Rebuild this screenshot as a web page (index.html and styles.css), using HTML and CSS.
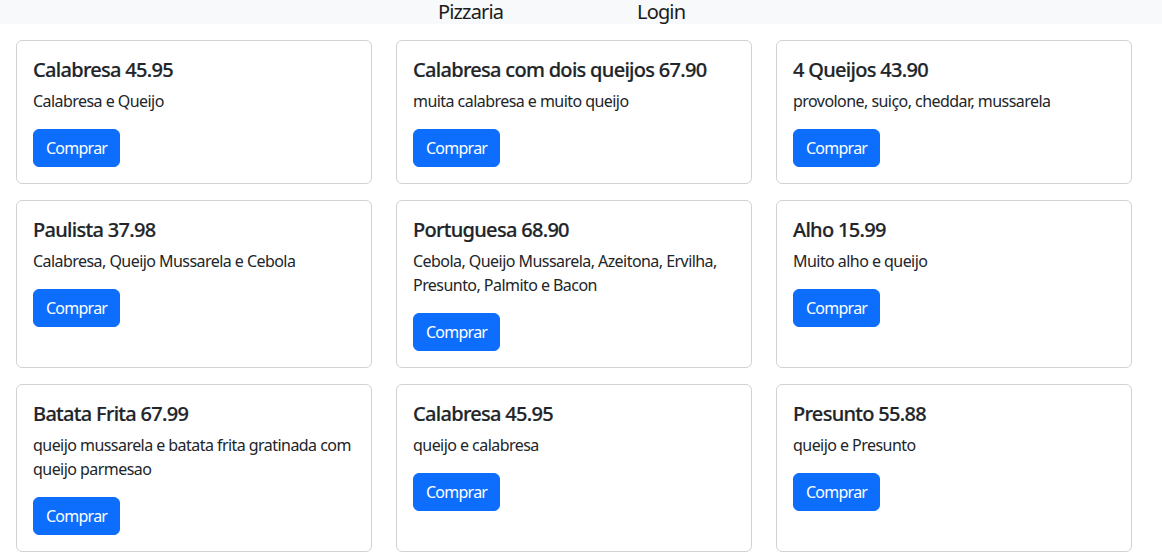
FILE: index.html
```html
<!DOCTYPE html>
<html lang="pt">
<head>
<meta charset="utf-8">
<title>Pizzaria</title>
<link rel="stylesheet" href="styles.css">
</head>
<body>
<nav class="navbar">
  <a class="brand" href="#">Pizzaria</a>
  <a class="nav-link" href="#">Login</a>
</nav>
<main class="grid">
  <div class="card"><h5>Calabresa 45.95</h5><p>Calabresa e Queijo</p><button class="btn">Comprar</button></div>
  <div class="card"><h5>Calabresa com dois queijos 67.90</h5><p>muita calabresa e muito queijo</p><button class="btn">Comprar</button></div>
  <div class="card"><h5>4 Queijos 43.90</h5><p>provolone, suiço, cheddar, mussarela</p><button class="btn">Comprar</button></div>
  <div class="card"><h5>Paulista 37.98</h5><p>Calabresa, Queijo Mussarela e Cebola</p><button class="btn">Comprar</button></div>
  <div class="card"><h5>Portuguesa 68.90</h5><p>Cebola, Queijo Mussarela, Azeitona, Ervilha, Presunto, Palmito e Bacon</p><button class="btn">Comprar</button></div>
  <div class="card"><h5>Alho 15.99</h5><p>Muito alho e queijo</p><button class="btn">Comprar</button></div>
  <div class="card"><h5>Batata Frita 67.99</h5><p>queijo mussarela e batata frita gratinada com queijo parmesao</p><button class="btn">Comprar</button></div>
  <div class="card"><h5>Calabresa 45.95</h5><p>queijo e calabresa</p><button class="btn">Comprar</button></div>
  <div class="card"><h5>Presunto 55.88</h5><p>queijo e Presunto</p><button class="btn">Comprar</button></div>
</main>
</body>
</html>
```
FILE: styles.css
```css
* { box-sizing: border-box; }
body {
  margin: 0;
  font-family: "Noto Sans", "Open Sans", sans-serif;
  font-size: 16px;
  line-height: 1.5;
  color: #212529;
  background: #fff;
  letter-spacing: -0.55px;
}
.navbar {
  display: flex;
  align-items: center;
  height: 24px;
  background: #f8f9fa;
  padding-left: 438px;
}
.navbar a {
  color: #1c1c1c;
  text-decoration: none;
  font-size: 20px;
  line-height: 24px;
  letter-spacing: -0.85px;
}
.navbar .brand {
  width: 199px;
}
.grid {
  display: grid;
  grid-template-columns: repeat(3, 356px);
  column-gap: 24px;
  row-gap: 16px;
  padding: 16px 0 0 16px;
  align-items: stretch;
}
.card {
  border: 1px solid rgba(0,0,0,.175);
  border-radius: 6px;
  padding: 16px;
  display: flex;
  flex-direction: column;
  align-items: flex-start;
}
.card h5 {
  margin: 0 0 8px;
  padding-top: 1px;
  height: 24px;
  font-size: 20px;
  font-weight: 500;
  line-height: 24px;
  letter-spacing: -0.7px;
  -webkit-text-stroke: 0.2px #212529;
}
.card p {
  margin: 0 0 16px;
}
.btn {
  font-family: inherit;
  font-size: 16px;
  line-height: 1.5;
  letter-spacing: -0.75px;
  color: #fff;
  background: #0d6efd;
  border: 1px solid #0d6efd;
  border-radius: 6px;
  padding: 6px 12px;
}
```
